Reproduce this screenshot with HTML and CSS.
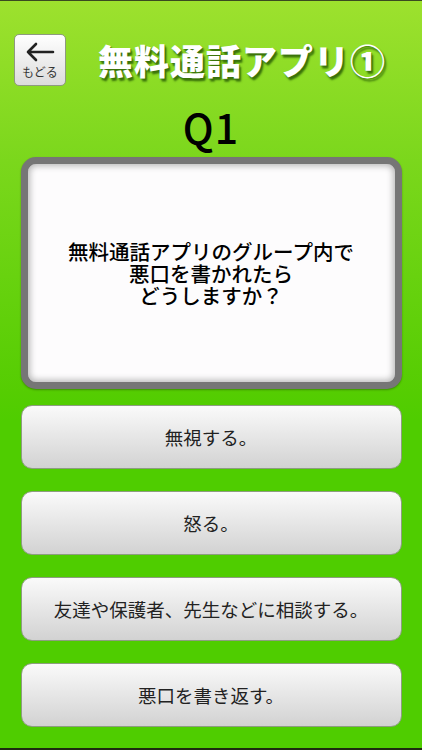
FILE: index.html
```html
<!DOCTYPE html>
<html lang="ja">
<head>
    <meta charset="UTF-8">
    <meta name="viewport" content="width=device-width, initial-scale=1.0">
    <title>無料通話アプリ①</title>
    <link rel="stylesheet" href="styles.css">
</head>
<body>
    <div class="screen">
        <header class="top-bar">
            <button class="back-btn" type="button">
                <svg class="back-arrow" width="30" height="20" viewBox="0 0 30 20">
                    <path d="M28 10H3M11 2L3 10l8 8" fill="none" stroke="#222" stroke-width="2.6" stroke-linecap="round" stroke-linejoin="round"/>
                </svg>
                <span class="back-label">もどる</span>
            </button>
            <h1 class="title">無料通話アプリ①</h1>
        </header>

        <div class="q-number">Q1</div>

        <div class="question-card">
            <p class="question-text">無料通話アプリのグループ内で<br>悪口を書かれたら<br>どうしますか？</p>
        </div>

        <div class="answers">
            <button class="answer-btn" type="button">無視する。</button>
            <button class="answer-btn" type="button">怒る。</button>
            <button class="answer-btn" type="button">友達や保護者、先生などに相談する。</button>
            <button class="answer-btn" type="button">悪口を書き返す。</button>
        </div>
    </div>
</body>
</html>
```

FILE: styles.css
```css
html, body {
    margin: 0;
    padding: 0;
}
body {
    font-family: "Noto Sans CJK JP", "Noto Sans", sans-serif;
    background: #4fcd00;
}
.screen {
    box-sizing: border-box;
    height: 750px;
    border-top: 1px solid #3a4a20;
    border-bottom: 2px solid #1d2a10;
    background: linear-gradient(to bottom, #9de12e 0px, #7bd71c 160px, #55cd02 390px, #4fcd00 420px, #4fcd00 100%);
    display: flex;
    flex-direction: column;
    align-items: center;
}
.top-bar {
    align-self: stretch;
    display: flex;
    align-items: center;
    padding: 33px 0 0 14px;
    gap: 32px;
}
.back-btn {
    box-sizing: border-box;
    width: 52px;
    height: 52px;
    padding: 0;
    border: 1px solid #8e9a80;
    border-radius: 5px;
    background: linear-gradient(to bottom, #ffffff, #dcdcdc);
    display: flex;
    flex-direction: column;
    align-items: center;
    justify-content: flex-start;
    font-family: inherit;
}
.back-arrow {
    display: block;
    margin-top: 7px;
}
.back-label {
    font-size: 12px;
    line-height: 14px;
    color: #333;
    margin-top: 3px;
}
.title {
    margin: 0;
    font-size: 35px;
    font-weight: 900;
    line-height: 52px;
    color: #fff;
    letter-spacing: 1px;
    text-shadow: 2px 3px 2px #3a720a, 1px 1px 1px #4d8a14;
}
.q-number {
    margin-top: 19px;
    font-size: 41px;
    font-weight: 500;
    line-height: 42px;
    color: #000;
    letter-spacing: 1px;
}
.question-card {
    box-sizing: border-box;
    width: 381px;
    height: 232px;
    margin-top: 10px;
    border: 7px solid #767676;
    border-radius: 15px;
    background: #fdfcfd;
    box-shadow: inset 0 0 6px 2px #b8b8b8, 0 1px 2px rgba(0, 0, 0, 0.3);
    display: flex;
    align-items: center;
    justify-content: center;
}
.question-text {
    margin: 0;
    text-align: center;
    font-size: 20.5px;
    font-weight: 500;
    line-height: 22px;
    color: #000;
}
.answers {
    display: flex;
    flex-direction: column;
    gap: 22px;
    margin-top: 16px;
}
.answer-btn {
    box-sizing: border-box;
    width: 381px;
    height: 64px;
    border: 1px solid #8d9d80;
    border-radius: 11px;
    background: linear-gradient(to bottom, #fafafa, #d2d2d2);
    font-family: inherit;
    font-size: 18.5px;
    color: #222;
    padding: 0;
}
```
